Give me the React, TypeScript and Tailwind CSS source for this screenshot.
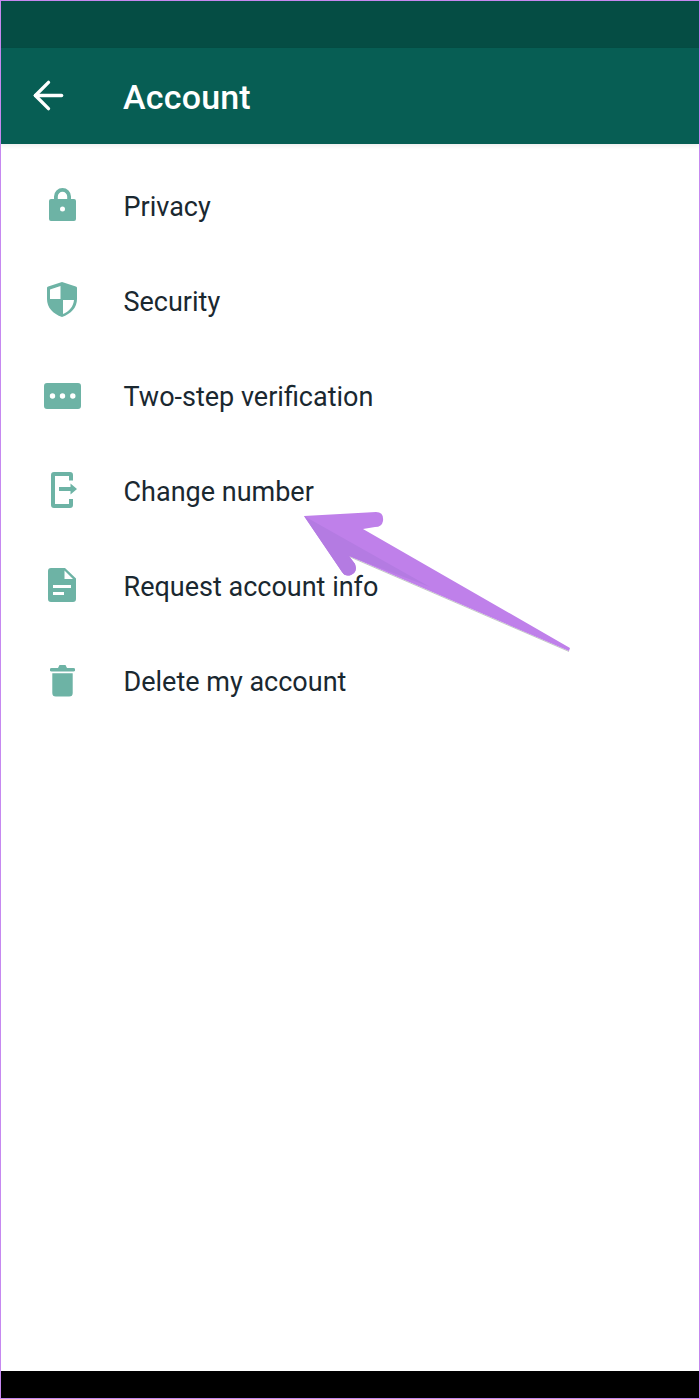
import { ArrowLeft } from "lucide-react";
import type { ReactNode } from "react";

const LockIcon = () => (
  <svg className="mb-[2px]" width="27" height="33" viewBox="0 0 27 33" fill="#6db3a5">
    <path d="M5 13V8.500a8.500 8.500 0 0 1 17 0V13h-3.800V8.500a4.700 4.700 0 0 0-9.400 0V13z" />
    <path fillRule="evenodd" d="M2 11h23a2 2 0 0 1 2 2v18a2 2 0 0 1-2 2H2a2 2 0 0 1-2-2V13a2 2 0 0 1 2-2zm11.500 7.500a2.500 2.500 0 1 0 0 5 2.500 2.500 0 0 0 0-5z" />
  </svg>
);

const ShieldIcon = () => (
  <svg className="mb-[2px]" width="30" height="35" viewBox="0 0 30 35" fill="#6db3a5">
    <path fillRule="evenodd" d="M15 0l13.800 4.400a1.500 1.500 0 0 1 1.200 1.400V17c0 8.500-6 15-15 18C6 32 0 25.500 0 17V5.800a1.500 1.500 0 0 1 1.200-1.400zM13.500 4L3 7.400V17h10.500zM16 18v14c6-2.500 10.500-7.500 11-14z" />
  </svg>
);

const DotsIcon = () => (
  <svg className="ml-[1px]" width="37" height="26" viewBox="0 0 37 26" fill="#6db3a5">
    <path fillRule="evenodd" d="M3 0h31a3 3 0 0 1 3 3v20a3 3 0 0 1-3 3H3a3 3 0 0 1-3-3V3a3 3 0 0 1 3-3zm5.500 10.300a2.700 2.700 0 1 0 0 5.400 2.700 2.700 0 0 0 0-5.400zm10 0a2.700 2.700 0 1 0 0 5.400 2.700 2.700 0 0 0 0-5.400zm10.300 0a2.700 2.700 0 1 0 0 5.400 2.700 2.700 0 0 0 0-5.400z" />
  </svg>
);

const ChangeNumberIcon = () => (
  <svg className="mb-[1px] ml-[4px]" width="26" height="36" viewBox="0 0 26 36" fill="#6db3a5">
    <path d="M3 0h16a3 3 0 0 1 3 3v5.500h-4V4H4v28h14v-5h4v6a3 3 0 0 1-3 3H3a3 3 0 0 1-3-3V3a3 3 0 0 1 3-3z" />
    <path d="M8 15h11.500V11.500L26 17l-6.500 5.500V19H8z" />
  </svg>
);

const DocIcon = () => (
  <svg className="mb-[1px]" width="28" height="34" viewBox="0 0 28 34" fill="#6db3a5">
    <path fillRule="evenodd" d="M3 0h14l11 10.500V31a3 3 0 0 1-3 3H3a3 3 0 0 1-3-3V3a3 3 0 0 1 3-3zM16.500 2.500V11H25zM5 17v3h18v-3zm0 7v3h11v-3z" />
  </svg>
);

const TrashIcon = () => (
  <svg width="25" height="32" viewBox="0 0 25 32" fill="#6db3a5">
    <path d="M9.500 0h6L17 3h6.500a1.700 1.700 0 0 1 0 3.500H1.500a1.700 1.700 0 0 1 0-3.500H8z" />
    <path d="M2.300 8.300h20.400V28a3.500 3.500 0 0 1-3.500 3.500H5.800A3.500 3.500 0 0 1 2.300 28z" />
  </svg>
);

const rows: { label: string; icon: ReactNode }[] = [
  { label: "Privacy", icon: <LockIcon /> },
  { label: "Security", icon: <ShieldIcon /> },
  { label: "Two-step verification", icon: <DotsIcon /> },
  { label: "Change number", icon: <ChangeNumberIcon /> },
  { label: "Request account info", icon: <DocIcon /> },
  { label: "Delete my account", icon: <TrashIcon /> },
];

const App = () => {
  return (
    <div className="relative flex h-[1399px] w-[700px] flex-col overflow-hidden border border-[#c688f0] bg-white font-['Roboto',sans-serif]">
      <div className="h-[47px] bg-[#054d44]" />
      <header className="flex h-[95.5px] items-center bg-[#075e54] text-white shadow-[0_2px_4px_rgba(0,0,0,0.07)]">
        <div className="flex w-[122px] pl-[25px]">
          <ArrowLeft size={45} strokeWidth={1.8} />
        </div>
        <h1 className="pt-[4px] text-[34px] font-medium tracking-[0.2px]">Account</h1>
      </header>
      <ul className="flex-1 pt-[14.5px] text-[#1a2830]">
        {rows.map((row) => (
          <li key={row.label} className="flex h-[95px] items-center">
            <div className="flex w-[122.5px] justify-center pr-[0.5px]">{row.icon}</div>
            <span className="pt-[4px] text-[27px]">{row.label}</span>
          </li>
        ))}
      </ul>
      <div className="h-[27px] bg-black" />
      {/* annotation arrow over the list */}
      <svg className="absolute top-[-1px] left-[-1px]" width="700" height="1399" viewBox="0 0 700 1399">
        <line x1="349" y1="556.500" x2="569" y2="651.500" stroke="#7f8f80" strokeWidth="1" opacity="0.45" />
        <path
          d="M304 516L376 512Q384 512 383 521Q382 527 375 527L363 529L570 648L569 651L349 556L355 564Q358 572 351 575Q345 577 342 572Z"
          fill="#bf80ea"
        />
        <path d="M304 516L430 587L349 556L355 564Q358 572 351 575Q345 577 342 572Z" fill="#b47be2" />
      </svg>
    </div>
  );
};

export default App;
